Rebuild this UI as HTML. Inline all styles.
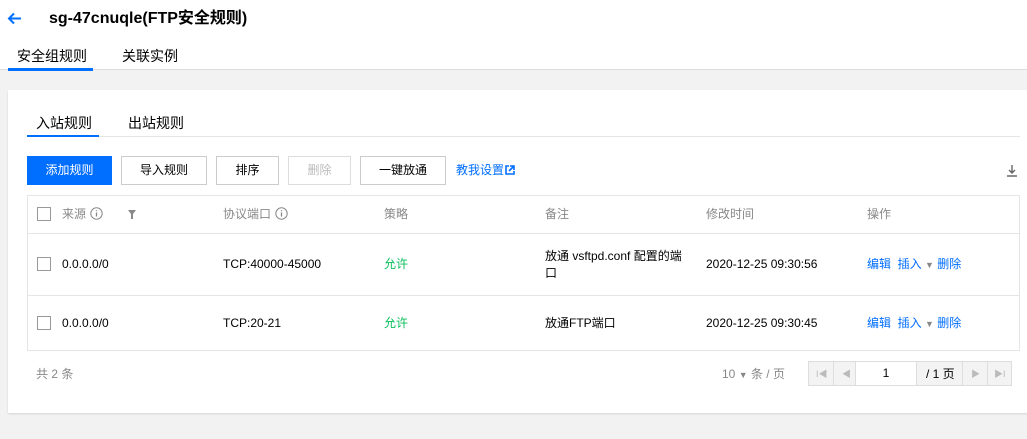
<!DOCTYPE html><html><head><meta charset="utf-8"><style>
*{margin:0;padding:0;box-sizing:border-box}
body{width:1027px;height:439px;overflow:hidden;background:#f2f2f2;font-family:"Liberation Sans","Noto Sans CJK SC",sans-serif;font-size:12px;color:#000;position:relative}
.a{position:absolute;white-space:nowrap;line-height:16px}
.top{position:absolute;left:0;top:0;width:1027px;height:70px;background:#fff;border-bottom:1px solid #ddd}
.card{position:absolute;left:8px;top:90px;width:1030px;height:323px;background:#fff;box-shadow:0 1px 2px rgba(0,0,0,.12)}
.btn{position:absolute;top:156px;height:29px;border:1px solid #ccc;background:#fff;text-align:center;line-height:27px;font-size:12px;color:#000}
.cb{position:absolute;width:14px;height:14px;border:1px solid #999;background:#fff}
.g{color:#888}
.bl{color:#006eff}
.hl{position:absolute;left:27px;width:993px;height:1px;background:#e5e5e5}
.i{display:inline-block;vertical-align:-2px;margin-left:4px}
</style></head><body>
<div class="top"></div>
<svg class="a" style="left:7px;top:12px" width="15" height="13" viewBox="0 0 15 13"><path d="M14 6.5H2M7 1.5L2 6.5l5 5" stroke="#006eff" stroke-width="2" fill="none"/></svg>
<div class="a" style="left:49px;top:9px;font-size:16px;font-weight:bold;line-height:20px">sg-47cnuqle(FTP安全规则)</div>
<div class="a" style="left:17px;top:48px;font-size:14px">安全组规则</div>
<div class="a" style="left:8px;top:68px;width:85px;height:3px;background:#006eff"></div>
<div class="a" style="left:122px;top:48px;font-size:14px">关联实例</div>
<div class="card"></div>
<div class="a" style="left:36px;top:115px;font-size:14px">入站规则</div>
<div class="a" style="left:128px;top:115px;font-size:14px">出站规则</div>
<div class="a" style="left:27px;top:136px;width:993px;height:1px;background:#e5e5e5"></div>
<div class="a" style="left:27px;top:135px;width:72px;height:2px;background:#006eff"></div>
<div class="btn" style="left:27px;width:85px;background:#006eff;border-color:#006eff;color:#fff">添加规则</div>
<div class="btn" style="left:121px;width:86px">导入规则</div>
<div class="btn" style="left:216px;width:63px">排序</div>
<div class="btn" style="left:288px;width:63px;color:#bbb;border-color:#ddd">删除</div>
<div class="btn" style="left:360px;width:86px">一键放通</div>
<div class="a bl" style="left:456px;top:162px">教我设置</div>
<svg class="a" style="left:505px;top:165px" width="10" height="10" viewBox="0 0 10 10"><path d="M4 1H1v8h8V6M5 1h4v4M9 1L4 6" stroke="#006eff" stroke-width="1.6" fill="none"/></svg>
<svg class="a" style="left:1006px;top:164px" width="12" height="13" viewBox="0 0 12 13"><path d="M6 1v8M3 6l3 3 3-3M1 12h10" stroke="#666" stroke-width="1.4" fill="none"/></svg>
<div class="a" style="left:27px;top:195px;width:993px;height:156px;border:1px solid #e5e5e5"></div>
<div class="hl" style="top:233px"></div>
<div class="hl" style="top:295px"></div>
<div class="cb" style="left:37px;top:207px"></div>
<div class="a g" style="left:62px;top:206px">来源<svg class="i" width="13" height="13" viewBox="0 0 13 13"><circle cx="6.5" cy="6.5" r="5.7" stroke="#888" fill="none"/><path d="M6.5 5.5v4M6.5 3.3v1" stroke="#888" stroke-width="1.3"/></svg></div>
<svg class="a" style="left:128px;top:210px" width="8" height="9" viewBox="0 0 8 9"><path d="M0 0h8L5 4v5H3V4z" fill="#888"/></svg>
<div class="a g" style="left:223px;top:206px">协议端口<svg class="i" width="13" height="13" viewBox="0 0 13 13"><circle cx="6.5" cy="6.5" r="5.7" stroke="#888" fill="none"/><path d="M6.5 5.5v4M6.5 3.3v1" stroke="#888" stroke-width="1.3"/></svg></div>
<div class="a g" style="left:384px;top:206px">策略</div>
<div class="a g" style="left:545px;top:206px">备注</div>
<div class="a g" style="left:706px;top:206px">修改时间</div>
<div class="a g" style="left:867px;top:206px">操作</div>
<div class="cb" style="left:37px;top:257px"></div>
<div class="a" style="left:62px;top:256px">0.0.0.0/0</div>
<div class="a" style="left:223px;top:256px">TCP:40000-45000</div>
<div class="a" style="left:384px;top:256px;color:#0abf5b">允许</div>
<div class="a" style="left:545px;top:248px;line-height:17px;white-space:normal;width:140px">放通 vsftpd.conf 配置的端口</div>
<div class="a" style="left:706px;top:256px">2020-12-25 09:30:56</div>
<div class="a bl" style="left:867px;top:256px">编辑 &nbsp;插入 <span style="color:#888;font-size:9px">▼</span> 删除</div>
<div class="cb" style="left:37px;top:316px"></div>
<div class="a" style="left:62px;top:315px">0.0.0.0/0</div>
<div class="a" style="left:223px;top:315px">TCP:20-21</div>
<div class="a" style="left:384px;top:315px;color:#0abf5b">允许</div>
<div class="a" style="left:545px;top:315px">放通FTP端口</div>
<div class="a" style="left:706px;top:315px">2020-12-25 09:30:45</div>
<div class="a bl" style="left:867px;top:315px">编辑 &nbsp;插入 <span style="color:#888;font-size:9px">▼</span> 删除</div>
<div class="a g" style="left:36px;top:366px">共 2 条</div>
<div class="a g" style="left:722px;top:366px">10 <span style="font-size:9px">▼</span> 条 / 页</div>
<div class="a" style="left:808px;top:361px;width:204px;height:25px;border:1px solid #ddd;background:#f3f3f3"></div>
<div class="a" style="left:855px;top:361px;width:62px;height:25px;border:1px solid #ddd;background:#fff;text-align:center;line-height:23px">1</div>
<div class="a" style="left:833px;top:361px;width:1px;height:25px;background:#ddd"></div>
<div class="a" style="left:962px;top:361px;width:1px;height:25px;background:#ddd"></div>
<div class="a" style="left:987px;top:361px;width:1px;height:25px;background:#ddd"></div>
<div class="a" style="left:926px;top:366px">/ 1 页</div>
<div class="a" style="left:816px;top:366px;color:#bbb;font-size:9px">I◀</div>
<div class="a" style="left:842px;top:366px;color:#bbb;font-size:9px">◀</div>
<div class="a" style="left:971px;top:366px;color:#bbb;font-size:9px">▶</div>
<div class="a" style="left:994px;top:366px;color:#bbb;font-size:9px">▶I</div>
</body></html>
